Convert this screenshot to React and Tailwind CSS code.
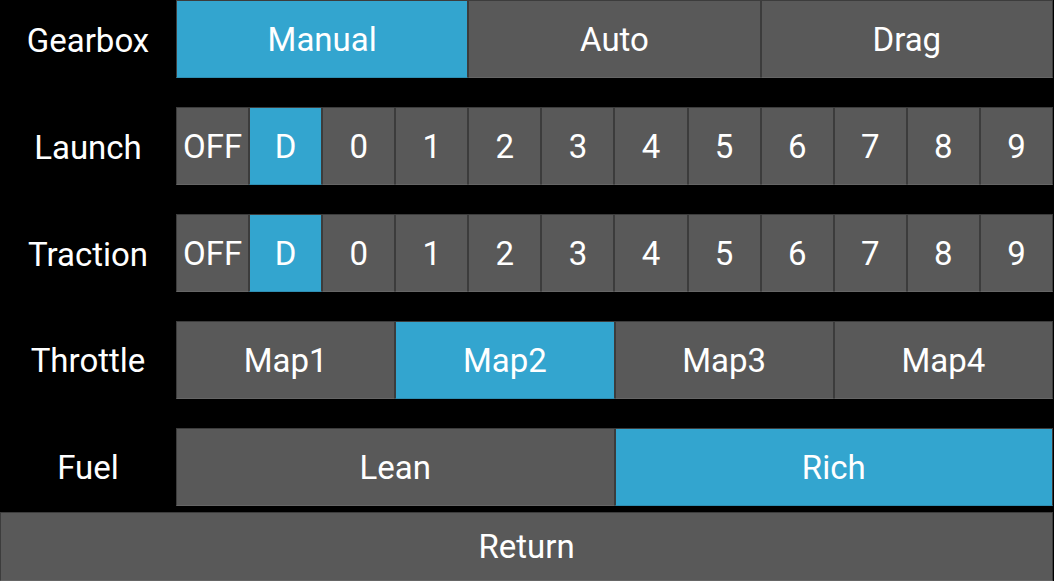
const rows = [
    {label: "Gearbox", items: ["Manual", "Auto", "Drag"], active: 0},
    {label: "Launch", items: ["OFF", "D", "0", "1", "2", "3", "4", "5", "6", "7", "8", "9"], active: 1},
    {label: "Traction", items: ["OFF", "D", "0", "1", "2", "3", "4", "5", "6", "7", "8", "9"], active: 1},
    {label: "Throttle", items: ["Map1", "Map2", "Map3", "Map4"], active: 1},
    {label: "Fuel", items: ["Lean", "Rich"], active: 1},
];

const Btn = ({text, active}) => (
    <button
        className={
            "flex-1 min-w-0 h-full flex items-center justify-center pt-[1px] border border-[#3c3c3c] text-white text-[33px] leading-none " +
            (active ? "bg-[#33a5cf] border-b-[#2f8fb3]" : "bg-[#595959] border-b-[#666666]")
        }
    >
        {text}
    </button>
);

export default function App() {
    return (
        <div
            className="w-[1054px] h-[581px] bg-black flex flex-col overflow-hidden"
            style={{fontFamily: "Roboto, 'Noto Sans', sans-serif"}}
        >
            <div className="flex flex-col gap-[28.9px]">
                {rows.map((row) => (
                    <div key={row.label} className="flex h-[78px]">
                        <div className="w-[176px] shrink-0 flex items-center justify-center pt-[3px] text-white text-[33px]">
                            {row.label}
                        </div>
                        <div className="flex flex-1 pr-[1px]">
                            {row.items.map((it, i) => (
                                <Btn key={i} text={it} active={i === row.active}/>
                            ))}
                        </div>
                    </div>
                ))}
            </div>
            <div className="mt-[6px] flex-1 flex pr-[1px]">
                <Btn text="Return"/>
            </div>
        </div>
    );
}
